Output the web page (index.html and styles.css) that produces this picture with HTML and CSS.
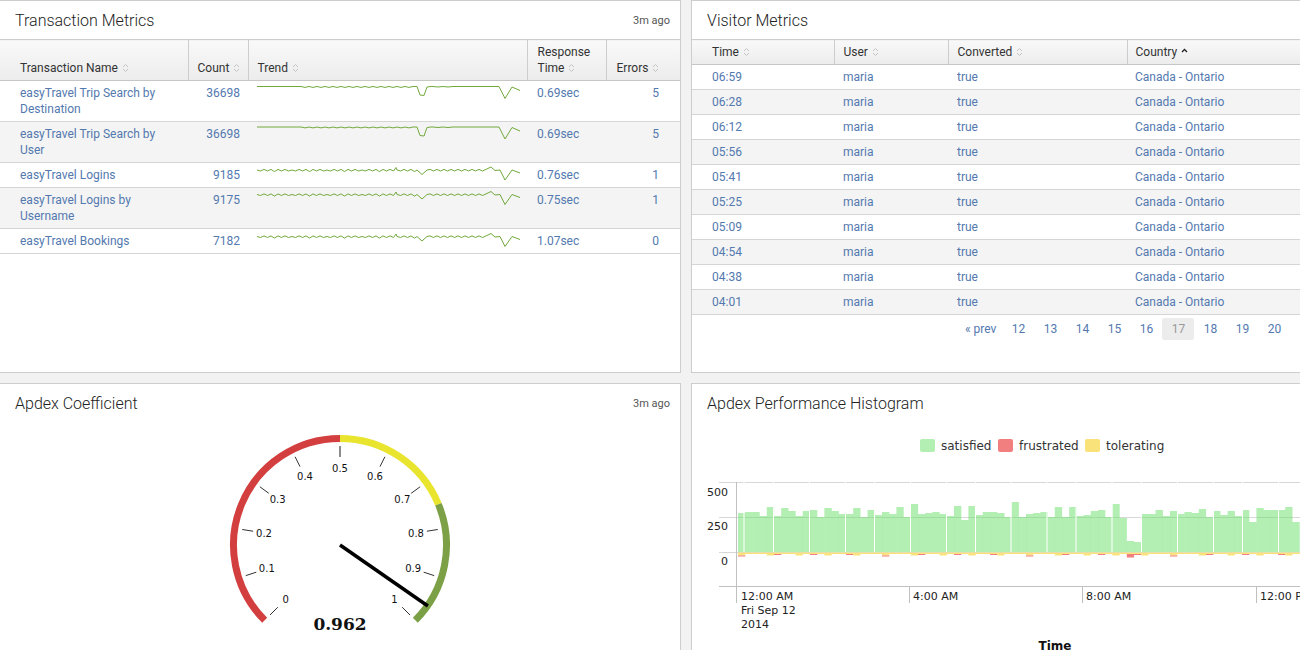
FILE: index.html
```html
<!DOCTYPE html>
<html lang="en">
<head>
<meta charset="utf-8">
<title>Dashboard</title>
<link rel="stylesheet" href="styles.css">
</head>
<body>
<div class="dashboard">
  <section class="panel">
    <header class="panel-head">
      <h2 class="panel-title">Transaction Metrics</h2>
      <span class="panel-time">3m ago</span>
    </header>
    <table class="table tx">
      <colgroup><col class="c-name"><col class="c-count"><col class="c-trend"><col class="c-resp"><col class="c-err"></colgroup>
      <thead>
        <tr>
          <th class="first">Transaction Name <svg class="sort" viewBox="0 0 7 10"><path d="M1 4L3.5 1.5L6 4M1 6L3.5 8.5L6 6"/></svg></th>
          <th class="nowrap">Count <svg class="sort" viewBox="0 0 7 10"><path d="M1 4L3.5 1.5L6 4M1 6L3.5 8.5L6 6"/></svg></th>
          <th>Trend <svg class="sort" viewBox="0 0 7 10"><path d="M1 4L3.5 1.5L6 4M1 6L3.5 8.5L6 6"/></svg></th>
          <th class="resp">Response Time <svg class="sort" viewBox="0 0 7 10"><path d="M1 4L3.5 1.5L6 4M1 6L3.5 8.5L6 6"/></svg></th>
          <th class="resp nowrap">Errors <svg class="sort" viewBox="0 0 7 10"><path d="M1 4L3.5 1.5L6 4M1 6L3.5 8.5L6 6"/></svg></th>
        </tr>
      </thead>
      <tbody>
        <tr><td class="first">easyTravel Trip Search by Destination</td><td class="num">36698</td><td class="trend"><svg class="spark" data-type="a" data-base="1.5"></svg></td><td class="resp">0.69sec</td><td class="num err">5</td></tr>
        <tr><td class="first">easyTravel Trip Search by User</td><td class="num">36698</td><td class="trend"><svg class="spark" data-type="a" data-base="1"></svg></td><td class="resp">0.69sec</td><td class="num err">5</td></tr>
        <tr><td class="first">easyTravel Logins</td><td class="num">9185</td><td class="trend"><svg class="spark" data-type="b" data-base="3"></svg></td><td class="resp">0.76sec</td><td class="num err">1</td></tr>
        <tr><td class="first">easyTravel Logins by Username</td><td class="num">9175</td><td class="trend"><svg class="spark" data-type="c" data-base="2.5"></svg></td><td class="resp">0.75sec</td><td class="num err">1</td></tr>
        <tr><td class="first">easyTravel Bookings</td><td class="num">7182</td><td class="trend"><svg class="spark" data-type="b" data-base="3.5"></svg></td><td class="resp">1.07sec</td><td class="num err">0</td></tr>
      </tbody>
    </table>
  </section>

  <section class="panel">
    <header class="panel-head">
      <h2 class="panel-title">Visitor Metrics</h2>
    </header>
    <table class="table visitors">
      <colgroup><col class="v-time"><col class="v-user"><col class="v-conv"><col class="v-country"></colgroup>
      <thead>
        <tr>
          <th class="first">Time <svg class="sort" viewBox="0 0 7 10"><path d="M1 4L3.5 1.5L6 4M1 6L3.5 8.5L6 6"/></svg></th>
          <th>User <svg class="sort" viewBox="0 0 7 10"><path d="M1 4L3.5 1.5L6 4M1 6L3.5 8.5L6 6"/></svg></th>
          <th>Converted <svg class="sort" viewBox="0 0 7 10"><path d="M1 4L3.5 1.5L6 4M1 6L3.5 8.5L6 6"/></svg></th>
          <th class="country">Country <svg class="sorted" viewBox="0 0 7 10"><path d="M1 5L3.5 2.5L6 5"/></svg></th>
        </tr>
      </thead>
      <tbody>
        <tr><td class="first">06:59</td><td>maria</td><td>true</td><td class="country">Canada - Ontario</td></tr>
        <tr><td class="first">06:28</td><td>maria</td><td>true</td><td class="country">Canada - Ontario</td></tr>
        <tr><td class="first">06:12</td><td>maria</td><td>true</td><td class="country">Canada - Ontario</td></tr>
        <tr><td class="first">05:56</td><td>maria</td><td>true</td><td class="country">Canada - Ontario</td></tr>
        <tr><td class="first">05:41</td><td>maria</td><td>true</td><td class="country">Canada - Ontario</td></tr>
        <tr><td class="first">05:25</td><td>maria</td><td>true</td><td class="country">Canada - Ontario</td></tr>
        <tr><td class="first">05:09</td><td>maria</td><td>true</td><td class="country">Canada - Ontario</td></tr>
        <tr><td class="first">04:54</td><td>maria</td><td>true</td><td class="country">Canada - Ontario</td></tr>
        <tr><td class="first">04:38</td><td>maria</td><td>true</td><td class="country">Canada - Ontario</td></tr>
        <tr><td class="first">04:01</td><td>maria</td><td>true</td><td class="country">Canada - Ontario</td></tr>
      </tbody>
    </table>
    <nav class="pager">
      <a class="prev" href="#">« prev</a>
      <a href="#">12</a><a href="#">13</a><a href="#">14</a><a href="#">15</a><a href="#">16</a>
      <a class="active" href="#">17</a>
      <a href="#">18</a><a href="#">19</a><a href="#">20</a>
    </nav>
  </section>

  <section class="panel">
    <header class="panel-head">
      <h2 class="panel-title">Apdex Coefficient</h2>
      <span class="panel-time">3m ago</span>
    </header>
    <svg class="gauge" width="680" height="228" viewBox="0 0 680 228">
      <g fill="none" stroke-width="7">
        <path stroke="#d33f3f" d="M264.69 198.31A106.5 106.5 0 0 1 340 16.5"/>
        <path stroke="#e9e42d" d="M340 16.5A106.5 106.5 0 0 1 438.39 82.24"/>
        <path stroke="#7ca045" d="M438.39 82.24A106.5 106.5 0 0 1 415.31 198.31"/>
      </g>
      <g stroke="#333" stroke-width="1">
        <line x1="277.8" y1="185.2" x2="270" y2="193"/>
        <line x1="256.3" y1="150.2" x2="245.8" y2="153.6"/>
        <line x1="253.1" y1="109.2" x2="242.2" y2="107.5"/>
        <line x1="268.8" y1="71.3" x2="259.9" y2="64.8"/>
        <line x1="300" y1="44.6" x2="295.1" y2="34.8"/>
        <line x1="340" y1="35" x2="340" y2="24" stroke="#666" stroke-width="1.5"/>
        <line x1="380" y1="44.6" x2="384.9" y2="34.8"/>
        <line x1="411.2" y1="71.3" x2="420.1" y2="64.8"/>
        <line x1="426.9" y1="109.2" x2="437.8" y2="107.5"/>
        <line x1="423.7" y1="150.2" x2="434.2" y2="153.6"/>
        <line x1="402.2" y1="185.2" x2="410" y2="193"/>
      </g>
      <g class="gauge-labels">
        <text x="285.6" y="177.4" dy=".35em">0</text>
        <text x="266.8" y="146.8" dy=".35em">0.1</text>
        <text x="264" y="111" dy=".35em">0.2</text>
        <text x="277.7" y="77.7" dy=".35em">0.3</text>
        <text x="305" y="54.4" dy=".35em">0.4</text>
        <text x="340" y="46" dy=".35em">0.5</text>
        <text x="375" y="54.4" dy=".35em">0.6</text>
        <text x="402.3" y="77.7" dy=".35em">0.7</text>
        <text x="416" y="111" dy=".35em">0.8</text>
        <text x="413.2" y="146.8" dy=".35em">0.9</text>
        <text x="394.4" y="177.4" dy=".35em">1</text>
      </g>
      <line x1="340" y1="123" x2="427.9" y2="184" stroke="#000" stroke-width="3.5"/>
      <text class="gauge-value" x="340" y="202" dy=".35em">0.962</text>
    </svg>
  </section>

  <section class="panel">
    <header class="panel-head">
      <h2 class="panel-title">Apdex Performance Histogram</h2>
    </header>
    <svg class="histo" width="620" height="228" viewBox="0 0 620 228">
      <g class="legend">
        <rect x="228" y="17" width="15" height="13" rx="2" fill="#b3eeb3"/>
        <text x="249" y="24" dy=".35em">satisfied</text>
        <rect x="306" y="17" width="15" height="13" rx="2" fill="#f27f7f"/>
        <text x="327" y="24" dy=".35em">frustrated</text>
        <rect x="393" y="17" width="15" height="13" rx="2" fill="#f9e27a"/>
        <text x="414" y="24" dy=".35em">tolerating</text>
      </g>
      <g stroke="#d8d8d8" stroke-width="1">
        <line x1="27" y1="60.5" x2="620" y2="60.5"/>
        <line x1="27" y1="95.5" x2="620" y2="95.5"/>
        <line x1="27" y1="130.5" x2="620" y2="130.5"/>
      </g>
      <g id="bars"></g>
      <g stroke="#c0c0c0" stroke-width="1">
        <line x1="27" y1="164.5" x2="620" y2="164.5"/>
        <line x1="44.5" y1="60" x2="44.5" y2="181"/>
        <line x1="217.5" y1="164" x2="217.5" y2="181"/>
        <line x1="390.5" y1="164" x2="390.5" y2="181"/>
        <line x1="564.5" y1="164" x2="564.5" y2="181"/>
      </g>
      <g class="axis" text-anchor="end">
        <text x="36" y="70" dy=".35em">500</text>
        <text x="36" y="104" dy=".35em">250</text>
        <text x="36" y="139" dy=".35em">0</text>
      </g>
      <g class="axis">
        <text x="49" y="174" dy=".35em">12:00 AM</text>
        <text x="49" y="188" dy=".35em">Fri Sep 12</text>
        <text x="49" y="202" dy=".35em">2014</text>
        <text x="221" y="174" dy=".35em">4:00 AM</text>
        <text x="394" y="174" dy=".35em">8:00 AM</text>
        <text x="568" y="174" dy=".35em">12:00 PM</text>
      </g>
      <text class="axis-title" x="363" y="224" dy=".35em">Time</text>
    </svg>
  </section>
</div>
<script src="script.js"></script>
</body>
</html>
```

FILE: styles.css
```css
* { box-sizing: border-box; }

html, body { margin: 0; }

body {
  background: #f2f2f2;
  font-family: Roboto, "Liberation Sans", sans-serif;
  color: #333;
  width: 1300px;
  height: 650px;
  overflow: hidden;
}

.dashboard {
  display: grid;
  grid-template-columns: 682px 682px;
  grid-template-rows: 373px 373px;
  gap: 10px;
  margin-left: -1px;
}

.panel {
  background: #fff;
  border: 1px solid #cdcdcd;
  overflow: hidden;
}

.panel-head {
  height: 38px;
  display: flex;
  align-items: center;
  justify-content: space-between;
  padding: 0 10px 0 15px;
}

.panel-title {
  margin: 0;
  font-size: 16px;
  font-weight: 300;
  color: #222;
}

.panel-time {
  font-size: 11px;
  color: #555;
}

.table {
  width: 100%;
  border-collapse: collapse;
  table-layout: fixed;
  font-size: 12px;
  line-height: 16px;
}

.table thead th {
  background: linear-gradient(#f9f9f9, #ececec);
  border-top: 1px solid #cdcdcd;
  border-bottom: 1px solid #c6c6c6;
  font-weight: 400;
  text-align: left;
  vertical-align: bottom;
  padding: 4px 4px 4px 9px;
  color: #333;
}

.table thead th + th { border-left: 1px solid #cdcdcd; }

.table thead th.nowrap { white-space: nowrap; }

.table td {
  padding: 4px 8px 4px 9px;
  vertical-align: top;
  color: #5379af;
  border-bottom: 1px solid #d5d5d5;
}

.table tbody tr:nth-child(even) td { background: #f4f4f4; }

.table .first { padding-left: 20px; }

.table .num { text-align: right; padding-right: 8px; }

.table .resp { padding-left: 10px; }

.table .err { padding-right: 21px; }

.sort, .sorted {
  width: 7px;
  height: 10px;
  vertical-align: -1px;
  margin-left: 1px;
  fill: none;
}

.sort { stroke: #c4c4c4; stroke-width: 1; }

.sorted { stroke: #222; stroke-width: 1.3; }

.c-name { width: 188px; }
.c-count { width: 60px; }
.c-trend { width: 279px; }
.c-resp { width: 79px; }
.c-err { width: 74px; }

.v-time { width: 142px; }
.v-user { width: 114px; }
.v-conv { width: 179px; }

.table .country { padding-left: 8px; }

.trend { padding-top: 4px; }

.spark {
  display: block;
  width: 264px;
  height: 16px;
  overflow: visible;
}

.spark polyline {
  fill: none;
  stroke: #72a93c;
  stroke-width: 1;
  stroke-linejoin: round;
}

.pager {
  display: flex;
  padding: 3px 0 0 267px;
  font-size: 12px;
}

.pager a {
  min-width: 32px;
  height: 22px;
  line-height: 22px;
  text-align: center;
  color: #5379af;
  text-decoration: none;
}

.pager .prev { padding: 0 6px; min-width: 0; }

.pager .active {
  background: #ececec;
  color: #999;
  border-radius: 2px;
}

.gauge, .histo { display: block; }

.gauge-labels text {
  font-family: "DejaVu Sans", sans-serif;
  font-size: 10px;
  fill: #111;
  text-anchor: middle;
}

.gauge-value {
  font-family: "DejaVu Serif", serif;
  font-weight: 700;
  font-size: 17px;
  fill: #111;
  text-anchor: middle;
}

.legend text {
  font-family: "DejaVu Sans", sans-serif;
  font-size: 12px;
  fill: #333;
}

.axis text {
  font-family: "DejaVu Sans", sans-serif;
  font-size: 11px;
  fill: #222;
}

.axis-title {
  font-family: "DejaVu Sans", sans-serif;
  font-size: 12px;
  font-weight: 700;
  fill: #111;
  text-anchor: middle;
}
```

FILE: script.js
```js
(function () {
  var NS = 'http://www.w3.org/2000/svg';

  function zig(from, to, step, amp, out) {
    var k = 0;
    for (var x = from; x < to; x += step) {
      out.push([x, (k % 2 ? amp : 0)]);
      k++;
    }
  }

  function shapeA() {
    var p = [[0, 0], [42, 0]];
    zig(44, 158, 4, 0.9, p);
    p.push([160, 0], [163, 8.5], [167, 9], [170, 0.5], [174, 0]);
    zig(176, 200, 5, 0.5, p);
    p.push([205, 0], [242, 0], [248, 12], [255, 0.5], [263, 4]);
    return p;
  }

  function shapeB(spikes) {
    var p = [];
    var k = 0;
    for (var x = 0; x < 158; x += 3.5) {
      var y = (k % 2 ? 1 : -0.6) + ((k * 7) % 5 === 0 ? 0.6 : 0);
      p.push([x, y]);
      k++;
    }
    p.push([139, -2.5], [142, 0.5]);
    p.sort(function (a, b) { return a[0] - b[0]; });
    p.push([160, 0], [165, 4.5], [170, 0]);
    for (x = 173; x < 232; x += 3.5) {
      p.push([x, (k % 2 ? 1 : -0.6)]);
      k++;
    }
    if (spikes) { p.push([234, -3], [238, 0.5]); }
    p.push([243, 0], [248, 10], [255, 0], [263, 3]);
    return p;
  }

  var shapes = { a: shapeA(), b: shapeB(true), c: shapeB(true) };

  var sparks = document.querySelectorAll('.spark');
  for (var i = 0; i < sparks.length; i++) {
    var s = sparks[i];
    var base = parseFloat(s.getAttribute('data-base'));
    var pts = shapes[s.getAttribute('data-type')];
    var str = pts.map(function (q) { return q[0] + ',' + (q[1] + base).toFixed(2); }).join(' ');
    s.setAttribute('viewBox', '0 0 264 16');
    var pl = document.createElementNS(NS, 'polyline');
    pl.setAttribute('points', str);
    s.appendChild(pl);
  }

  var tops = [513,512,512,516,507,516,508,511,516,511,
              510,517,508,511,514,514,508,517,510,515,
              512,514,507,517,504,514,513,512,514,516,
              506,520,506,515,512,512,513,517,502,517,
              514,513,512,517,507,517,507,516,515,511,
              510,517,504,518,541,542,514,514,510,516,
              511,514,512,513,509,517,511,515,511,516,
              510,522,508,510,510,510,507,522];

  var g = document.getElementById('bars');
  function rect(x, y, w, h, fill) {
    var r = document.createElementNS(NS, 'rect');
    r.setAttribute('x', x.toFixed(2));
    r.setAttribute('y', y.toFixed(2));
    r.setAttribute('width', w.toFixed(2));
    r.setAttribute('height', h.toFixed(2));
    r.setAttribute('fill', fill);
    g.appendChild(r);
    return r;
  }

  for (var j = 0; j < tops.length; j++) {
    var x = 46 + j * 7.2;
    var top = tops[j] - 422;
    var bar = rect(x, top, 7.3, 130 - top, 'rgb(103,221,103)');
    bar.setAttribute('fill-opacity', '0.5');
    var yh = 1.5 + ((j * 3) % 4 === 0 ? 1.5 : 0);
    rect(x, 130.5, 7.3, yh, '#f9e27a');
    if ((j * 7) % 5 === 0 || j === 54) {
      rect(x, 130.5 + yh, 7.3, j === 54 ? 3.5 : 1, '#f27f7f');
    }
  }

  var gaps = [52, 81.5, 117.5, 153.5, 182.5, 218.5, 254.5, 283.5, 319, 355, 384, 420, 449.5, 485.5, 521.5, 550.5, 586.5];
  gaps.forEach(function (gx) {
    rect(gx - 0.5, 50, 1, 80, '#ffffff');
  });
})();
```
